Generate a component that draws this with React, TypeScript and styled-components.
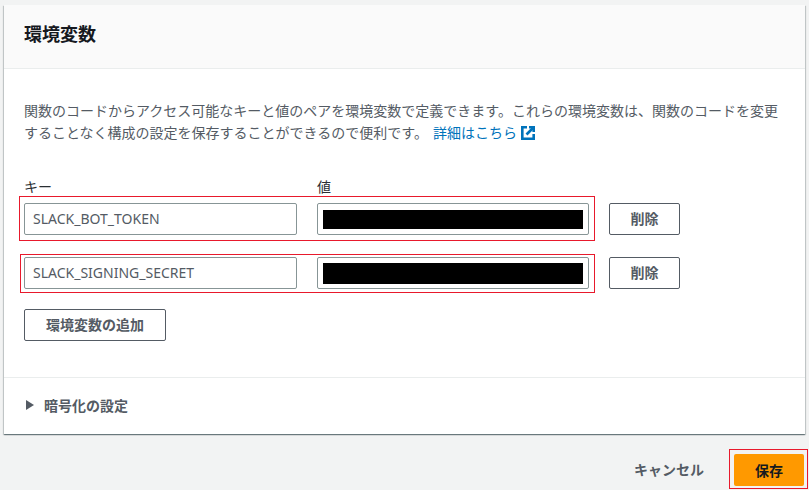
import React from 'react';
import styled, { createGlobalStyle } from 'styled-components';

const GlobalStyle = createGlobalStyle`
html, body {
    margin: 0;
    padding: 0;
    background: #f2f3f3;
}
body {
    font-family: "Noto Sans", "Noto Sans CJK JP", sans-serif;
    color: #545b64;
}
`;

const Page = styled.div`
width: 809px;
height: 490px;
overflow: hidden;
padding: 5px 4px 0;
box-sizing: border-box;
`;

const Card = styled.section`
height: 429px;
background: #fff;
box-sizing: border-box;
display: flex;
flex-direction: column;
box-shadow: 0 1px 1px 0 rgba(0, 28, 36, 0.4), 1px 1px 1px 0 rgba(0, 28, 36, 0.15), -1px 1px 1px 0 rgba(0, 28, 36, 0.15);
`;

const CardHeader = styled.header`
height: 64px;
box-sizing: border-box;
background: #fafafa;
border-bottom: 1px solid #eaeded;
padding: 0 20px 6px;
display: flex;
align-items: center;
`;

const Title = styled.h2`
margin: 0;
font-size: 18px;
font-weight: 700;
color: #16191f;
line-height: 24px;
`;

const CardBody = styled.div`
height: 309px;
box-sizing: border-box;
padding: 31px 20px 0;
border-bottom: 1px solid #eaeded;
`;

const Description = styled.p`
margin: 0 0 33px;
font-size: 14px;
line-height: 22px;
width: 766px;
`;

const HelpLink = styled.a`
color: #0073bb;
margin-left: 5px;
white-space: nowrap;
svg {
    margin-left: 4px;
    vertical-align: -2px;
}
`;

const Labels = styled.div`
display: flex;
font-size: 14px;
line-height: 20px;
color: #2a2e33;
margin-bottom: -1px;
`;

const KeyLabel = styled.span`
width: 293px;
`;

const Row = styled.div<{ $left: number; $bottom: number; $after: number }>`
display: flex;
align-items: flex-end;
margin-left: ${props => -props.$left - 1}px;
margin-bottom: ${props => props.$after}px;
button {
    margin-bottom: ${props => props.$bottom + 1}px;
}
`;

const Highlight = styled.div<{ $top: number; $bottom: number; $left: number }>`
display: flex;
gap: 20px;
border: 1px solid #e8192c;
padding: ${props => props.$top}px 5px ${props => props.$bottom}px ${props => props.$left}px;
margin-right: 14px;
`;

const Field = styled.div`
width: 273px;
height: 32px;
box-sizing: border-box;
border: 1px solid #879596;
border-radius: 2px;
background: #fff;
padding: 0 8px 2px;
font-size: 14px;
display: flex;
align-items: center;
color: #545b64;
`;

const MaskedField = styled(Field)`
width: 272px;
padding: 0 5px;
`;

const Mask = styled.div<{ $height: number }>`
width: 100%;
height: ${props => props.$height}px;
background: #000;
`;

const OutlineButton = styled.button<{ $width: number }>`
width: ${props => props.$width}px;
height: 32px;
box-sizing: border-box;
border: 1px solid #545b64;
border-radius: 2px;
background: #fff;
color: #545b64;
font-family: inherit;
font-size: 14px;
font-weight: 700;
padding: 0 0 2px;
`;

const CardFooter = styled.div`
flex: 1;
display: flex;
align-items: center;
padding: 0 0 2px 22px;
gap: 10px;
font-size: 14px;
font-weight: 700;
`;

const Caret = styled.span`
width: 0;
height: 0;
border-left: 8px solid #545b64;
border-top: 5px solid transparent;
border-bottom: 5px solid transparent;
`;

const Actions = styled.div`
display: flex;
justify-content: flex-end;
align-items: center;
margin-top: 15px;
margin-right: -3px;
`;

const CancelButton = styled.button`
border: none;
background: none;
padding: 0;
margin-right: 25px;
color: #545b64;
font-family: inherit;
font-size: 14px;
font-weight: 700;
`;

const SaveHighlight = styled.div`
border: 1px solid #e8192c;
padding: 4px 3px 2px 4px;
width: 79px;
height: 40px;
box-sizing: border-box;
`;

const SaveButton = styled.button`
width: 100%;
height: 32px;
border: none;
border-radius: 2px;
background: #ff9900;
color: #16191f;
font-family: inherit;
font-size: 14px;
font-weight: 700;
padding: 0;
`;

function ExternalIcon() {
    return (
        <svg width="14" height="14" viewBox="0 0 14 14" fill="none" stroke="#0073bb" strokeWidth="2.6">
            <path d="M6 1.3H1.3v11.4h11.4V8" />
            <path d="M8 1.3h4.7V6" />
            <path d="M12.5 1.5L5.5 8.5" />
        </svg>
    );
}

export default function App() {
    return (
        <Page>
            <GlobalStyle />
            <Card>
                <CardHeader>
                    <Title>環境変数</Title>
                </CardHeader>
                <CardBody>
                    <Description>
                        関数のコードからアクセス可能なキーと値のペアを環境変数で定義できます。これらの環境変数は、関数のコードを変更することなく構成の設定を保存することができるので便利です。
                        <HelpLink>詳細はこちら<ExternalIcon /></HelpLink>
                    </Description>
                    <Labels>
                        <KeyLabel>キー</KeyLabel>
                        <span>値</span>
                    </Labels>
                    <Row $left={4} $bottom={5} $after={13}>
                        <Highlight $top={6} $bottom={5} $left={4}>
                            <Field>SLACK_BOT_TOKEN</Field>
                            <MaskedField><Mask $height={19} /></MaskedField>
                        </Highlight>
                        <OutlineButton $width={71}>削除</OutlineButton>
                    </Row>
                    <Row $left={3} $bottom={3} $after={16}>
                        <Highlight $top={2} $bottom={3} $left={3}>
                            <Field>SLACK_SIGNING_SECRET</Field>
                            <MaskedField><Mask $height={21} /></MaskedField>
                        </Highlight>
                        <OutlineButton $width={71}>削除</OutlineButton>
                    </Row>
                    <OutlineButton $width={142}>環境変数の追加</OutlineButton>
                </CardBody>
                <CardFooter>
                    <Caret />
                    暗号化の設定
                </CardFooter>
            </Card>
            <Actions>
                <CancelButton>キャンセル</CancelButton>
                <SaveHighlight>
                    <SaveButton>保存</SaveButton>
                </SaveHighlight>
            </Actions>
        </Page>
    );
}
